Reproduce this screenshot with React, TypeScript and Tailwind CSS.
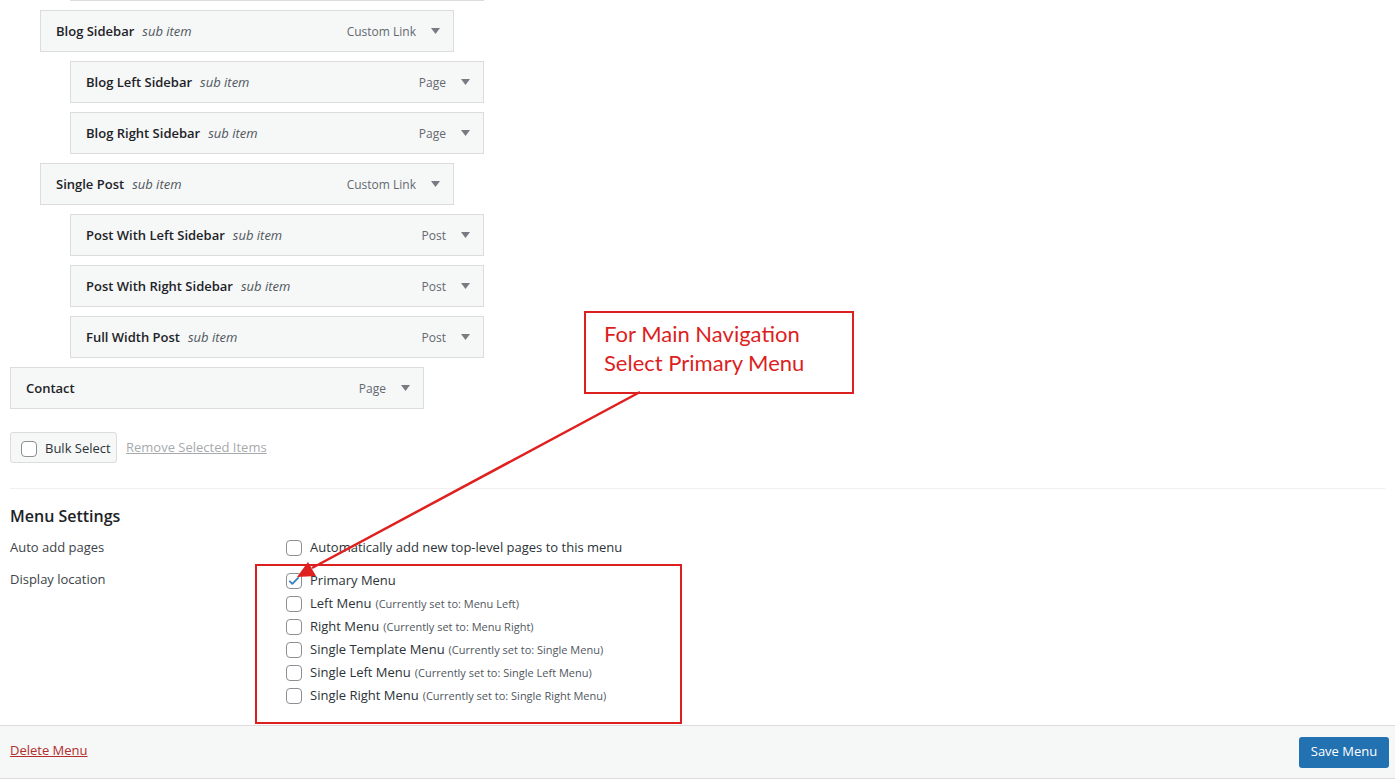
import React from 'react';

interface MenuItem {
    title: string;
    sub?: boolean;
    type: string;
    depth: number;
}

const items: MenuItem[] = [
    { title: 'Blog Sidebar', sub: true, type: 'Custom Link', depth: 1 },
    { title: 'Blog Left Sidebar', sub: true, type: 'Page', depth: 2 },
    { title: 'Blog Right Sidebar', sub: true, type: 'Page', depth: 2 },
    { title: 'Single Post', sub: true, type: 'Custom Link', depth: 1 },
    { title: 'Post With Left Sidebar', sub: true, type: 'Post', depth: 2 },
    { title: 'Post With Right Sidebar', sub: true, type: 'Post', depth: 2 },
    { title: 'Full Width Post', sub: true, type: 'Post', depth: 2 },
    { title: 'Contact', type: 'Page', depth: 0 },
];

const locations = [
    { name: 'Primary Menu', note: '', checked: true },
    { name: 'Left Menu', note: '(Currently set to: Menu Left)', checked: false },
    { name: 'Right Menu', note: '(Currently set to: Menu Right)', checked: false },
    { name: 'Single Template Menu', note: '(Currently set to: Single Menu)', checked: false },
    { name: 'Single Left Menu', note: '(Currently set to: Single Left Menu)', checked: false },
    { name: 'Single Right Menu', note: '(Currently set to: Single Right Menu)', checked: false },
];

const depthMargin = ['ml-0', 'ml-[30px]', 'ml-[60px]'];

const Checkbox = ({ checked }: { checked?: boolean }) => (
    <span className="flex h-4 w-4 shrink-0 items-center justify-center rounded-[4px] border border-[#8c8f94] bg-white">
        {checked && (
            <svg width="14" height="14" viewBox="0 0 20 20">
                <path d="M4 10.5l3.6 3.6L16 5.5" fill="none" stroke="#3582c4" strokeWidth="2.6" strokeLinecap="round" strokeLinejoin="round" />
            </svg>
        )}
    </span>
);

const Caret = () => (
    <svg width="9" height="6" viewBox="0 0 9 6" className="shrink-0">
        <path d="M0 0h9L4.5 6z" fill="#787c82" />
    </svg>
);

export default function App() {
    return (
        <div
            className="relative flex h-[779px] w-[1395px] flex-col overflow-hidden bg-white text-[13px] text-[#3c434a]"
            style={{ fontFamily: '"Open Sans", "Noto Sans", sans-serif' }}
        >
            {/* MENU ITEMS */}
            <div className="flex flex-col gap-[9px] px-[10px]">
                <div className="ml-[60px] h-px w-[414px] bg-[#dcdcde]" />
                {items.map((item) => (
                    <div
                        key={item.title}
                        className={`${depthMargin[item.depth]} flex h-[42px] w-[414px] items-center border border-[#dcdcde] bg-[#f6f7f7] pl-[15px] pr-[13px] pt-[2px]`}
                    >
                        <span className="font-semibold text-[#1d2327]">{item.title}</span>
                        {item.sub && <span className="ml-[8px] italic text-[#50575e]">sub item</span>}
                        <span className="ml-auto text-[12px] text-[#646970]">{item.type}</span>
                        <span className="ml-[15px] -mt-[2px]"><Caret /></span>
                    </div>
                ))}
            </div>

            {/* BULK SELECT */}
            <div className="mt-[23px] flex items-center px-[10px]">
                <div className="flex h-[31px] w-[107px] items-center gap-[8px] rounded-[3px] border border-[#dcdcde] bg-[#f6f7f7] pl-[10px] pt-[2px] text-[#2c3338]">
                    <Checkbox />
                    <span>Bulk Select</span>
                </div>
                <span className="ml-[9px] text-[#a7aaad] underline">Remove Selected Items</span>
            </div>

            <div className="mx-[10px] mt-[25px] border-t border-[#f0f0f1]" />

            {/* MENU SETTINGS */}
            <div className="px-[10px]">
                <h3 className="mt-[15px] text-[16px] font-semibold text-[#1d2327]">Menu Settings</h3>
                <div className="mt-[10px] flex items-center">
                    <span className="w-[276px]">Auto add pages</span>
                    <label className="flex items-center gap-[8px] text-[#2c3338]">
                        <Checkbox />
                        <span>Automatically add new top-level pages to this menu</span>
                    </label>
                </div>
                <div className="mt-[11px] flex">
                    <span className="w-[276px] leading-[20px]">Display location</span>
                    <div className="flex flex-col gap-[3px] pt-[2px]">
                        {locations.map((loc) => (
                            <label key={loc.name} className="flex h-[20px] items-center gap-[8px] text-[#2c3338]">
                                <Checkbox checked={loc.checked} />
                                <span>
                                    {loc.name}
                                    {loc.note && <span className="ml-[4px] text-[11px] text-[#50575e]">{loc.note}</span>}
                                </span>
                            </label>
                        ))}
                    </div>
                </div>
            </div>

            {/* FOOTER */}
            <div className="mt-auto flex h-[54px] items-center justify-between border-y border-[#dcdcde] bg-[#f6f7f7] pl-[10px] pr-[6px]">
                <span className="-mt-[2px] text-[#b32d2e] underline">Delete Menu</span>
                <button className="h-[31px] w-[90px] rounded-[3px] bg-[#2271b1] text-[13px] text-white">Save Menu</button>
            </div>

            {/* ANNOTATIONS */}
            <div
                className="absolute left-[584px] top-[311px] flex h-[83px] w-[270px] flex-col border-[2.5px] border-[#dc1f1f] pl-[18px] pt-[6px] text-[22px] leading-[29px] text-[#dc1f1f]"
                style={{ fontFamily: 'Lato, "Liberation Sans", sans-serif' }}
            >
                <span>For Main Navigation</span>
                <span>Select Primary Menu</span>
            </div>
            <div className="absolute left-[255px] top-[564px] h-[160px] w-[427px] border-[2.5px] border-[#dc1f1f]" />
            <svg className="absolute left-0 top-0" width="1395" height="779">
                <line x1="640" y1="392" x2="312" y2="568" stroke="#e01f1f" strokeWidth="2.5" />
                <path d="M297 577 L308 562 L316 576 Z" fill="#e01f1f" />
            </svg>
        </div>
    );
}
